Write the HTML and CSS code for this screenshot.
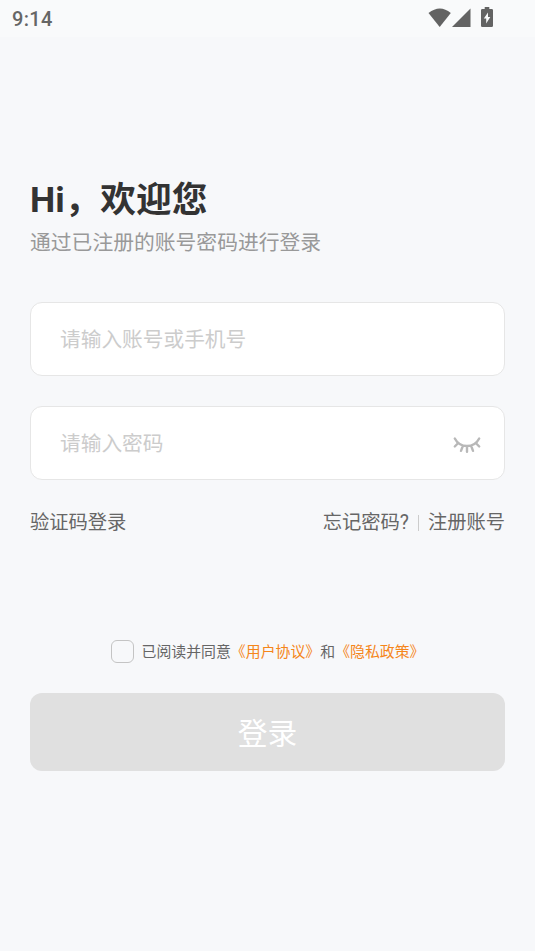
FILE: index.html
```html
<!DOCTYPE html>
<html lang="zh-CN">
<head>
<meta charset="utf-8">
<title>登录</title>
<link rel="stylesheet" href="styles.css">
</head>
<body>
<header class="status">
  <span class="time">9:14</span>
  <svg class="wifi" width="24" height="20" viewBox="0 0 24 20"><path d="M0.500 5Q12-4 22.800 5L11.700 19Z"/></svg>
  <svg class="signal" width="19" height="19" viewBox="0 0 19 19"><path d="M18.500 0.500V19H0Z"/></svg>
  <svg class="battery" width="12" height="20" viewBox="0 0 12 20"><path fill-rule="evenodd" d="M3.700 0H8.300V2H10.700Q12 2 12 3.300V18.700Q12 20 10.700 20H1.300Q0 20 0 18.700V3.300Q0 2 1.300 2H3.700ZM7 5.500L2.800 11.500H5.200V16.500L9.300 10H7Z"/></svg>
</header>
<main class="page">
  <h1 class="title">Hi，欢迎您</h1>
  <p class="subtitle">通过已注册的账号密码进行登录</p>
  <div class="field"><span>请输入账号或手机号</span></div>
  <div class="field"><span>请输入密码</span>
    <svg class="eye" width="28" height="18" viewBox="0 0 28 18"><path d="M1.800 2.500C7 12.500 21 12.500 26.200 2.500M5.200 7L1.800 10.500M10 9.500L8 14.800M14 10V15.800M18 9.500L20 14.800M22.800 7L26.200 10.500"/></svg>
  </div>
  <nav class="links"><a>验证码登录</a><div class="right"><a>忘记密码?</a><i class="sep"></i><a>注册账号</a></div></nav>
  <div class="agree"><span class="check"></span><p>已阅读并同意<a>《用户协议》</a>和<a>《隐私政策》</a></p></div>
  <button class="submit">登录</button>
</main>
</body>
</html>
```
FILE: styles.css
```css
* { box-sizing: border-box; margin: 0; padding: 0; }
body { background: #f7f8fa; font-family: Roboto, "Noto Sans CJK SC", sans-serif; color: #333; }
.status { height: 37px; display: flex; align-items: flex-start; padding: 8px 42px 0 12px; background: #f9fafb; color: #666; fill: #636363; }
.time { font-size: 20px; line-height: 22px; font-weight: 500; margin-right: auto; letter-spacing: .3px; }
.signal { margin-right: 10px; }
.battery { margin-top: -1px; }
.page { padding: 140px 30px 0; }
.title { font-size: 35.7px; line-height: 46px; font-weight: 700; }
.subtitle { font-size: 20.8px; line-height: 30px; margin-top: 5px; color: #999; }
.field { height: 74px; margin-top: 30px; padding: 0 23.5px 2px 29px; display: flex; align-items: center; justify-content: space-between; background: #fff; border: 1px solid #e6e6e6; border-radius: 12px; font-size: 20.7px; color: #ccc; }
.subtitle + .field { margin-top: 44px; }
.eye { margin-top: 6px; fill: none; stroke: #b8b8b8; stroke-width: 2.4; stroke-linecap: round; }
.links { display: flex; justify-content: space-between; margin-top: 28px; font-size: 19.3px; line-height: 30px; color: #666; }
.right { display: flex; align-items: center; }
.sep { width: 1px; height: 16px; margin: 0 9px; background: #ccc; }
.agree { display: flex; justify-content: center; align-items: center; height: 24px; margin-top: 101px; font-size: 14.9px; color: #666; }
.agree p { margin-top: -2px; }
.check { width: 23px; height: 23px; margin-right: 8px; border: 1px solid #c4c4c4; border-radius: 6px; }
.agree a { color: #f5861a; }
.submit { display: block; width: 100%; height: 78px; margin-top: 30px; padding-bottom: 2px; border: 0; border-radius: 12px; background: #e0e0e0; color: #fff; font: 400 29.7px Roboto, "Noto Sans CJK SC", sans-serif; }
```
